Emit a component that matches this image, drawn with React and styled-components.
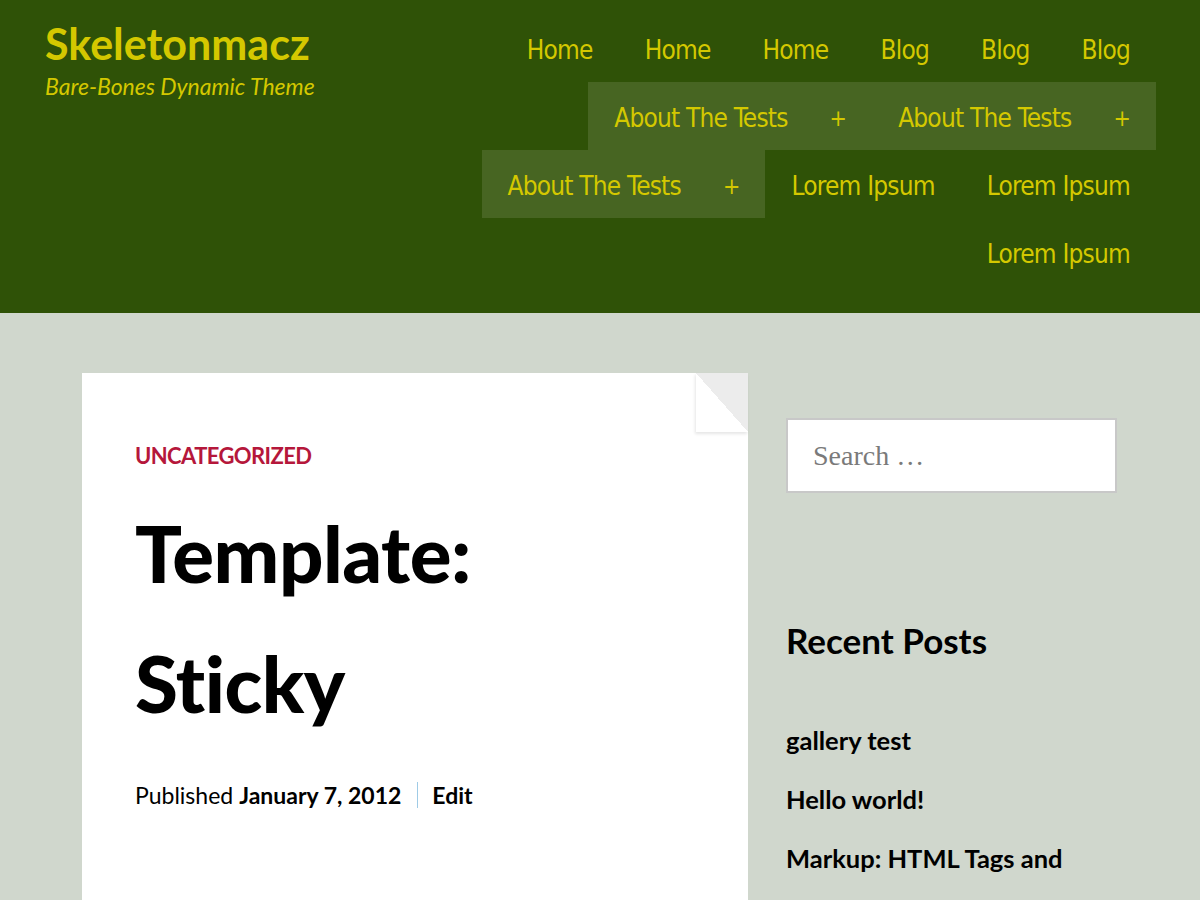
import React from "react";
import styled, { createGlobalStyle } from "styled-components";

const GlobalStyle = createGlobalStyle`
  body {
    margin: 0;
    background: #d0d7cd;
    font-family: "Lato", "Open Sans", sans-serif;
    color: #000;
  }
  * {
    box-sizing: border-box;
  }
`;

const Header = styled.header`
  display: flex;
  justify-content: space-between;
  align-items: flex-start;
  height: 313px;
  padding: 14px 44px 0 45px;
  background: #2f5207;
`;

const Branding = styled.div`
  padding-top: 7px;
`;

const SiteTitle = styled.h1`
  margin: 0;
  font-size: 43px;
  line-height: 46px;
  font-weight: 700;
  color: #d4c800;
`;

const Tagline = styled.p`
  margin: 5px 0 0;
  font-size: 23px;
  font-style: italic;
  color: #d4c800;
`;

const Nav = styled.ul`
  display: flex;
  flex-wrap: wrap;
  justify-content: flex-end;
  width: 760px;
  margin: 0;
  padding: 0;
  list-style: none;
`;

const NavItem = styled.li`
  display: flex;
  align-items: center;
  height: 68px;
  padding: 3px 26px 0;
  background: ${(p) => (p.$sub ? "#476522" : "transparent")};
  color: #d4c800;
  font-family: "Liberation Sans Narrow", "DejaVu Sans Condensed", sans-serif;
  font-size: 26px;
  letter-spacing: -0.8px;
`;

const Toggle = styled.span`
  margin-left: 42px;
  font-size: 23px;
`;

const Main = styled.main`
  display: flex;
  align-items: flex-start;
  gap: 38px;
  padding: 60px 82px 0;
`;

const Card = styled.article`
  position: relative;
  width: 666px;
  min-height: 560px;
  padding: 69px 53px 40px;
  background: #fff;
`;

const Fold = styled.div`
  position: absolute;
  top: 0;
  right: 0;
  width: 52px;
  height: 59px;
  background: linear-gradient(to bottom left, #ececec 50%, #fff 50%);
  box-shadow: -1px 2px 3px rgba(0, 0, 0, 0.1);
`;

const Category = styled.div`
  font-size: 22px;
  font-weight: 700;
  letter-spacing: -0.6px;
  color: #b5173b;
`;

const Title = styled.h2`
  margin: 19px 0 0;
  font-size: 78px;
  line-height: 130px;
  font-weight: 900;
  letter-spacing: -0.5px;
`;

const Meta = styled.div`
  display: flex;
  align-items: center;
  margin-top: 33px;
  font-size: 23px;
`;

const Strong = styled.span`
  font-weight: 700;
  margin-left: ${(p) => p.$gap || 0}px;
`;

const Sep = styled.span`
  width: 1px;
  height: 26px;
  margin: 0 14px 0 16px;
  background: #9fcbe6;
`;

const Sidebar = styled.aside`
  width: 331px;
  padding-top: 45px;
`;

const Search = styled.div`
  display: flex;
  align-items: center;
  height: 75px;
  padding-left: 25px;
  border: 2px solid #c8c8c8;
  background: #fff;
  color: #7a7a7a;
  font-family: "Liberation Serif", serif;
  font-size: 28px;
`;

const WidgetTitle = styled.h3`
  margin: 127px 0 0;
  font-size: 35px;
  line-height: 40px;
  font-weight: 700;
`;

const PostList = styled.ul`
  margin: 65px 0 0;
  padding: 0;
  list-style: none;
`;

const PostLink = styled.li`
  font-size: 25.5px;
  line-height: 30px;
  font-weight: 700;
  margin-bottom: 29px;
`;

const navItems = [
  { label: "Home" },
  { label: "Home" },
  { label: "Home" },
  { label: "Blog" },
  { label: "Blog" },
  { label: "Blog" },
  { label: "About The Tests", sub: true },
  { label: "About The Tests", sub: true },
  { label: "About The Tests", sub: true },
  { label: "Lorem Ipsum" },
  { label: "Lorem Ipsum" },
  { label: "Lorem Ipsum" },
];

const posts = ["gallery test", "Hello world!", "Markup: HTML Tags and"];

const App = () => {
  return (
    <>
      <GlobalStyle />
      <Header>
        <Branding>
          <SiteTitle>Skeletonmacz</SiteTitle>
          <Tagline>Bare-Bones Dynamic Theme</Tagline>
        </Branding>
        <Nav>
          {navItems.map((item, i) => (
            <NavItem key={i} $sub={item.sub}>
              {item.label}
              {item.sub && <Toggle>+</Toggle>}
            </NavItem>
          ))}
        </Nav>
      </Header>
      <Main>
        <Card>
          <Fold />
          <Category>UNCATEGORIZED</Category>
          <Title>
            Template:
            <br />
            Sticky
          </Title>
          <Meta>
            Published <Strong $gap={6}>January 7, 2012</Strong>
            <Sep />
            <Strong>Edit</Strong>
          </Meta>
        </Card>
        <Sidebar>
          <Search>Search …</Search>
          <WidgetTitle>Recent Posts</WidgetTitle>
          <PostList>
            {posts.map((p) => (
              <PostLink key={p}>{p}</PostLink>
            ))}
          </PostList>
        </Sidebar>
      </Main>
    </>
  );
};

export default App;
